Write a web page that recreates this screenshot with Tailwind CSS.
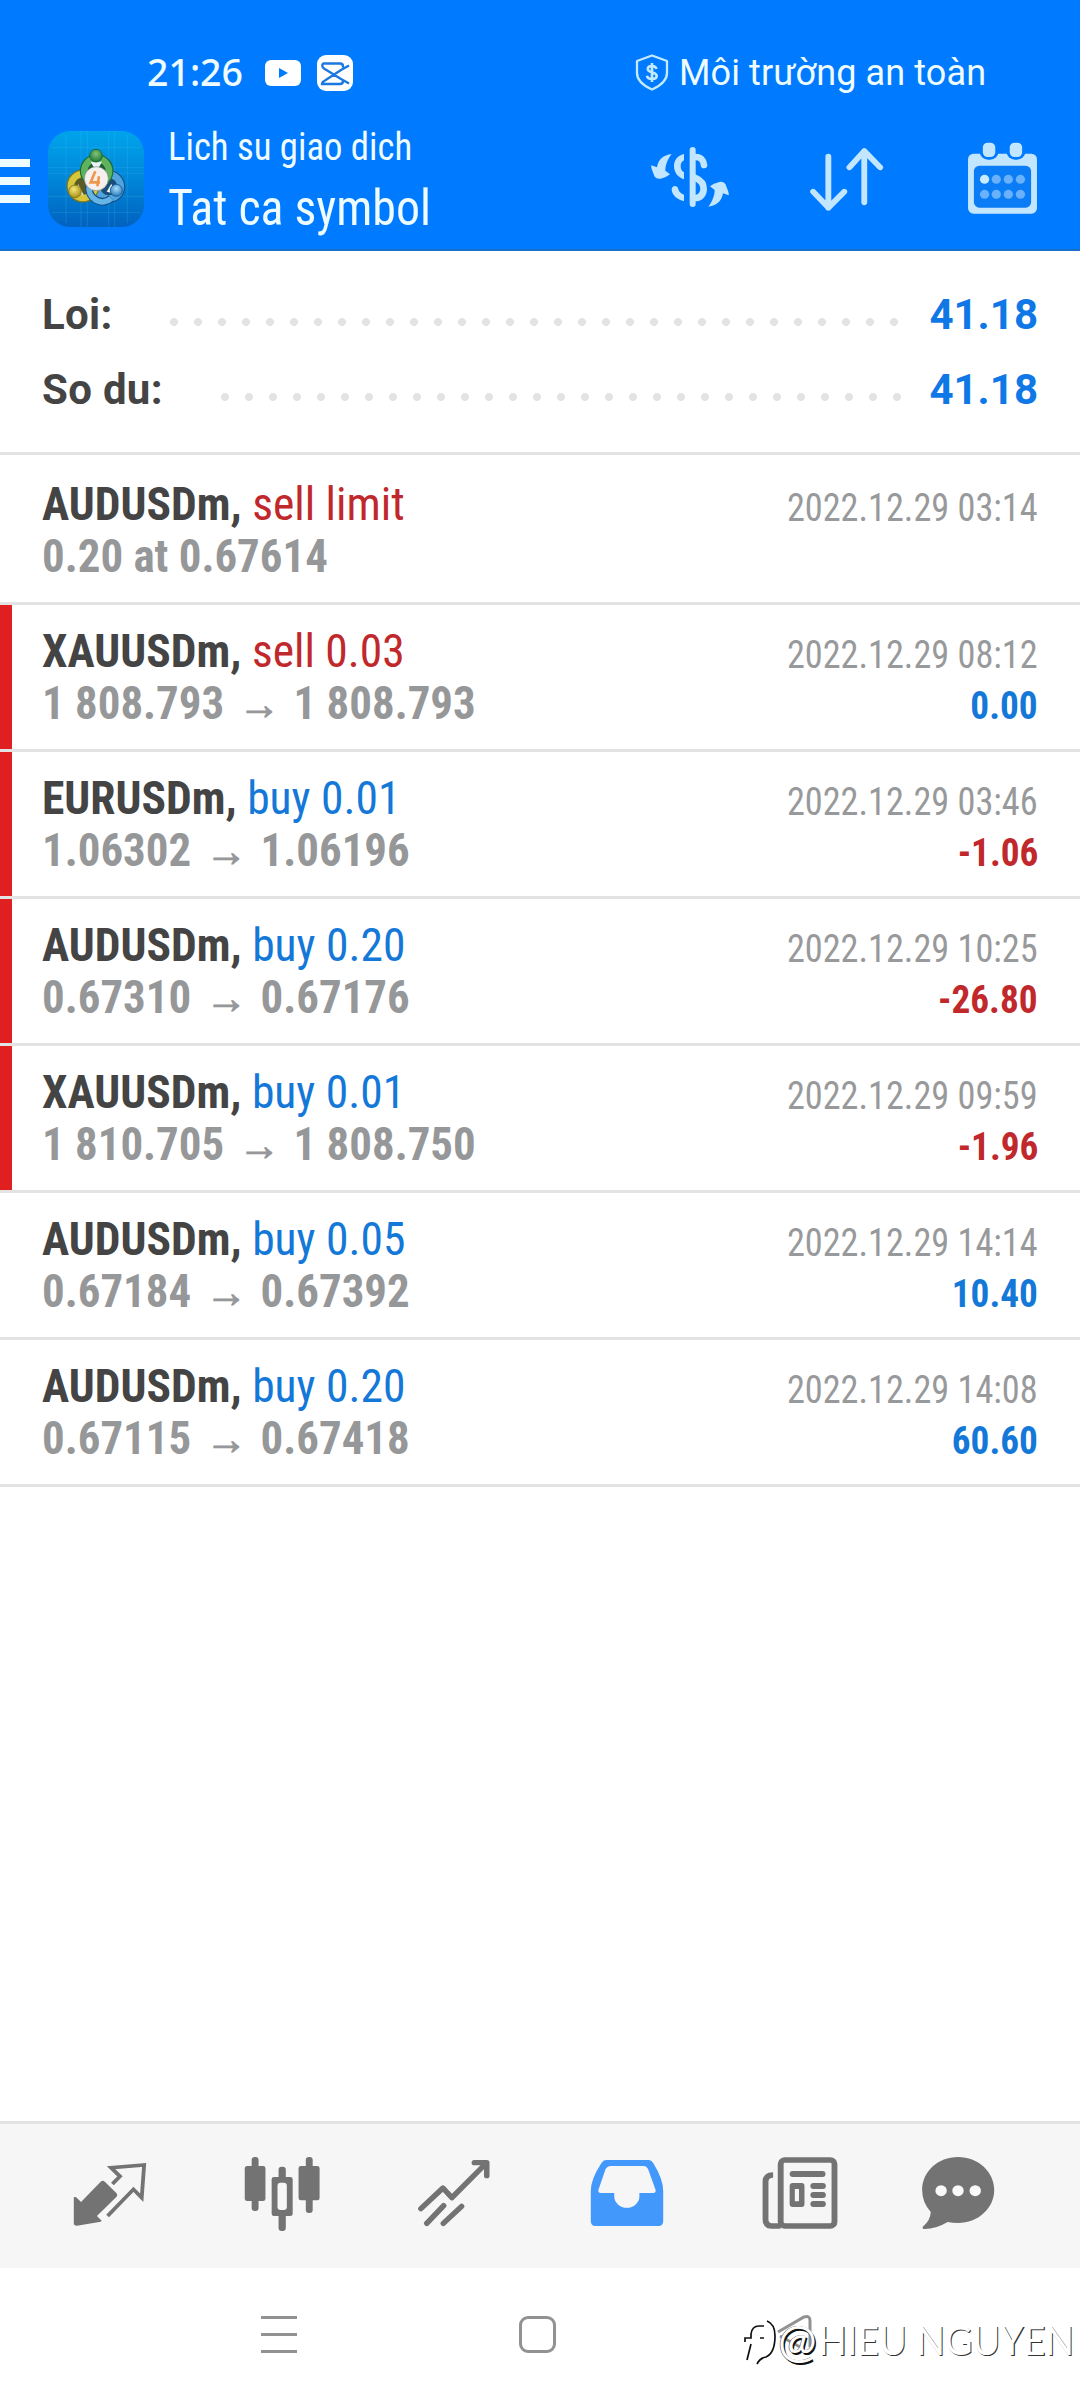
<!DOCTYPE html>
<html lang="vi">
<head>
<meta charset="utf-8">
<title>Lich su giao dich</title>
<script src="https://cdn.jsdelivr.net/npm/@tailwindcss/browser@4"></script>
</head>
<body class="w-[1080px] h-[2400px] flex flex-col bg-white font-['Roboto',sans-serif] overflow-hidden">

<header class="h-[251px] bg-[#007aff] border-b-2 border-[#1a6fc8] text-[#eefcff]">
  <div class="h-[109px] pt-[43px] flex leading-[60px]">
    <span class="-mt-px ml-[147px] w-[118px] text-[37.5px] font-medium font-['Noto_Sans',sans-serif]">21:26</span>
    <svg class="mt-[17px] w-9 h-[26px]" viewBox="0 0 36 26"><rect width="36" height="26" rx="6" fill="#fff"/><path d="M14 8l9 5-9 5z" fill="#007aff"/></svg>
    <svg class="ml-4 mt-[12px] w-9 h-9" viewBox="0 0 36 36"><rect width="36" height="36" rx="9" fill="#fff"/><path d="M32 10.500L24 15 8 25.500c-2 1-3 2-3 3.500h18c2 0 3-1 3-3l0-1M32 28.500L24 24 7 13.500C5 12.500 4.500 8.500 7 8.500h16c2 0 3 1 3 3v1" fill="none" stroke="#1b78e0" stroke-width="2.400"/></svg>
    <svg class="ml-[282px] mt-[11px] w-[34px] h-[37px]" viewBox="0 0 34 37" fill="none" stroke="#c3eaff" stroke-width="2.300"><path d="M17 1.500L32 7v12c0 8-6 12.500-15 16.500C8 31.500 2 27 2 19V7z" stroke-linejoin="round"/><path d="M21.500 15c-.5-2-2-3-4.500-3s-4.200 1.100-4.200 3c0 4.400 8.900 2.400 8.900 6.800 0 2.100-1.900 3.200-4.700 3.200s-4.600-1.200-5-3.300M17 9v19" stroke-width="2.600"/></svg>
    <span class="ml-[10px] text-[36px] tracking-[0.1px]">Môi trường an toàn</span>
  </div>
  <div class="h-[140px] flex items-center">
    <div class="mt-[4px] w-[30px] flex flex-col gap-[10px]"><i class="h-2 bg-[#eefcff]"></i><i class="h-2 bg-[#eefcff]"></i><i class="h-2 bg-[#eefcff]"></i></div>
    <svg class="ml-[18px] w-24 h-24" viewBox="0 0 288 288">
      <defs>
        <linearGradient id="bg" x1="0" y1="0" x2="0" y2="1"><stop offset="0" stop-color="#00a4ec"/><stop offset=".5" stop-color="#0086d8"/><stop offset="1" stop-color="#0062bf"/></linearGradient>
        <radialGradient id="gg" cx=".5" cy=".35" r=".7"><stop offset="0" stop-color="#7fc478"/><stop offset="1" stop-color="#1b7034"/></radialGradient>
        <radialGradient id="gy" cx=".4" cy=".35" r=".7"><stop offset="0" stop-color="#f4e878"/><stop offset="1" stop-color="#a78a12"/></radialGradient>
        <radialGradient id="gb" cx=".5" cy=".35" r=".7"><stop offset="0" stop-color="#a6dcf8"/><stop offset="1" stop-color="#1f74ba"/></radialGradient>
      </defs>
      <rect width="288" height="288" rx="66" fill="url(#bg)"/>
      <path d="M54 12v264M99 0v288M118 0v288M182 0v288M200 0v288M238 12v264M12 50h264M0 110h288M0 128h288M0 196h288M12 244h264" stroke="#4fc6f0" stroke-opacity=".2" stroke-width="3"/>
      <circle cx="182" cy="167" r="36" fill="none" stroke="#164f85" stroke-width="27"/>
      <circle cx="182" cy="167" r="36" fill="#1c4f78" stroke="#51a5de" stroke-width="20"/>
      <circle cx="105" cy="165" r="36" fill="none" stroke="#7d751c" stroke-width="27"/>
      <circle cx="105" cy="165" r="36" fill="#5b5a24" stroke="#d6c63c" stroke-width="20"/>
      <circle cx="146" cy="120" r="37" fill="none" stroke="#1d6b3a" stroke-width="27"/>
      <circle cx="146" cy="120" r="37" fill="#1d5a38" stroke="#5fb35c" stroke-width="20"/>
      <path d="M124 166a40 40 0 0 0 66 36" fill="none" stroke="#164f85" stroke-width="24"/>
      <path d="M124 164a40 40 0 0 0 66 38" fill="none" stroke="#64b4e6" stroke-width="17"/>
      <path d="M128 92h34l-10 18h-14zM90 158l-2 26 20 10zM190 158l10 30-24-6z" fill="#e8f4f4"/>
      <circle cx="144" cy="74" r="19" fill="url(#gg)" stroke="#1d6b3a" stroke-width="3"/>
      <circle cx="81" cy="181" r="19" fill="url(#gy)" stroke="#8a7d1c" stroke-width="3"/>
      <circle cx="205" cy="178" r="18" fill="url(#gb)" stroke="#1a5f9c" stroke-width="3"/>
      <circle cx="145" cy="143" r="36" fill="#f5f0ee" stroke="#7c8a80" stroke-width="2"/>
      <path d="M142 121l-14 33h28M153 136l-5 30" fill="none" stroke="#f0974a" stroke-width="8"/>
    </svg>
    <div class="ml-6 w-[472px] font-['Roboto_Condensed',sans-serif]">
      <p class="text-[39px] leading-[58px] origin-left scale-x-[.941]">Lich su giao dich</p>
      <p class="text-[50px] leading-[64px] origin-left scale-x-[.958]">Tat ca symbol</p>
    </div>
    <svg class="-mt-2 w-[100px] h-[90px]" viewBox="0 0 300 270" fill="#c3e6ff">
      <rect x="149" y="51" width="18" height="180" rx="9"/>
      <path d="M132 72c-20 5-30 20-30 36 0 20 12 34 30 40v-21c-7-4-10-11-10-19s4-14 10-17zM132 213c-20-4-36-18-37-34 0-14 18-14 20-1 2 8 8 13 17 16z"/>
      <path d="M167 81c14 0 24 10 25 24M167 144c14 6 24 14 24 32s-12 28-24 28" fill="none" stroke="#c3e6ff" stroke-width="20" stroke-linecap="round"/>
      <path d="M95 72C70 75 55 88 51 112l-17-6q-3 4 10 34 6 8 18 6 18-4 28-13l-14-11c0-17 8-37 19-50z"/>
      <path d="M205 230c25-3 40-16 44-40l17 6q3-4-10-34-6-8-18-6-18 4-28 13l14 11c0 17-8 37-19 50z"/>
    </svg>
    <svg class="ml-[69px] w-[76px] h-[65px]" preserveAspectRatio="none" viewBox="780 318 220 195" fill="none" stroke="#c3e6ff" stroke-width="17" stroke-linecap="round" stroke-linejoin="round"><path d="M836 347v153M792 452l44 48 46-48M940 484V330M897 379l43-49 46 49"/></svg>
    <svg class="-mt-[3px] ml-[82px] w-[71px] h-[72px]" preserveAspectRatio="none" viewBox="1240 304 206 216">
      <rect x="1243" y="339" width="200" height="180" rx="16" fill="#c3e6ff"/><rect x="1260" y="375" width="166" height="126" rx="16" fill="#0a7cf5"/>
      <rect x="1277" y="297" width="54" height="60" rx="24" fill="#007aff"/><rect x="1355" y="297" width="54" height="60" rx="24" fill="#007aff"/>
      <rect x="1286" y="306" width="36" height="43" rx="14" fill="#c3e6ff"/><rect x="1364" y="306" width="36" height="43" rx="14" fill="#c3e6ff"/>
      <g fill="#69b1fb"><circle cx="1291" cy="416" r="13.500" fill="#c9ecff"/><circle cx="1325" cy="416" r="13.500"/><circle cx="1360" cy="416" r="13.500"/><circle cx="1395" cy="416" r="13.500"/><circle cx="1291" cy="461" r="13.500"/><circle cx="1325" cy="461" r="13.500"/><circle cx="1360" cy="461" r="13.500"/><circle cx="1395" cy="461" r="13.500"/></g>
    </svg>
  </div>
</header>

<section class="h-[204px] pt-[26px] pr-[42px] pl-[42px] border-b-[3px] border-[#e3e3e3] text-[42px] font-bold text-[#444]">
  <div class="h-[75px] flex items-center">
    <span class="w-[120px] tracking-[0.3px]">Loi:</span>
    <i class="mt-[15px] w-[744px] h-6 bg-[radial-gradient(circle,#e3e3e3_3.700px,transparent_4.300px)] bg-size-[24px_24px]"></i>
    <span class="ml-auto text-[#0f78e6]">41.18</span>
  </div>
  <div class="h-[75px] flex items-center">
    <span class="w-[171px] whitespace-nowrap tracking-[0.3px]">So du:</span>
    <i class="mt-[15px] w-[696px] h-6 bg-[radial-gradient(circle,#e3e3e3_3.700px,transparent_4.300px)] bg-size-[24px_24px]"></i>
    <span class="ml-auto text-[#0f78e6]">41.18</span>
  </div>
</section>

<main id="deals" class="flex-1 pt-[3px] font-['Roboto_Condensed',sans-serif]"></main>

<nav class="h-[147px] bg-[#f6f6f6] border-t-[3px] border-[#e2e2e2] pl-[70px] grid grid-cols-[171.5px_172px_173px_173.5px_158px_auto] items-center">
  <svg class="size-20" preserveAspectRatio="none" viewBox="204 168 232 240" fill="#737373"><path d="M215 291l7 1 14 14 57-61q6-5 12 0l34 35q4 5 0 10l-57 58 14 14-3 3-69 12q-9 0-9-8z"/><path d="M327 252l22-23-26-26 96-8-7 98-24-25-75 80" fill="none" stroke="#737373" stroke-width="11"/></svg>
  <svg class="size-20" preserveAspectRatio="none" viewBox="701 168 232 240" fill="#737373"><rect x="709" y="198" width="60" height="105" rx="7"/><rect x="729" y="171" width="20" height="162" rx="9"/><rect x="865" y="198" width="61" height="103" rx="7"/><rect x="886" y="171" width="20" height="168" rx="9"/><rect x="807" y="200" width="21" height="193" rx="9"/><rect x="787" y="231" width="61" height="117" rx="7"/><rect x="804" y="248" width="27" height="82" rx="9" fill="#f6f6f6"/></svg>
  <svg class="size-20" preserveAspectRatio="none" viewBox="1201 168 232 240" fill="none" stroke="#737373" stroke-width="16" stroke-linecap="round" stroke-linejoin="round"><path d="M1221 326l64-62 26 29 100-104M1376 188h36v39"/><path d="M1238 370l49-53M1286 370l53-51"/></svg>
  <svg class="size-20" preserveAspectRatio="none" viewBox="135 168 232 240"><path fill-rule="evenodd" d="M190 180h124q8 0 13 9 29 48 29 84v91q0 14-14 14H160q-14 0-14-14v-91q0-36 31-84 5-9 13-9zM203 198q-9 0-14 9l-21 63q-1 9 7 9h39v10a36 34 0 0 0 73 0v-10h40q8 0 7-9l-22-63q-4-9-12-9z" fill="#4398fb"/></svg>
  <svg class="size-20" preserveAspectRatio="none" viewBox="639 168 232 240"><g fill="none" stroke="#737373"><rect x="699" y="180" width="156" height="198" rx="12" stroke-width="17"/><path d="M677 225q-22 0-22 20v113q0 20 17 20h27" stroke-width="17"/></g><g fill="#737373"><rect x="725" y="213" width="104" height="18" rx="9"/><path fill-rule="evenodd" d="M734 249h26q8 0 8 9v54q0 9-8 9h-26q-9 0-9-9v-54q0-9 9-9zM740 267v37h12v-37z"/><rect x="785" y="249" width="45" height="18" rx="9"/><rect x="785" y="276" width="45" height="18" rx="9"/><rect x="785" y="303" width="45" height="18" rx="9"/></g></svg>
  <svg class="size-20" preserveAspectRatio="none" viewBox="1097 168 232 240"><path d="M1213 171c58 0 105 44 105 99s-47 99-105 99q-16 0-30-3-34 21-66 21-9 0-6-7 22-18 23-44-25-29-25-66c0-55 46-99 104-99z" fill="#737373"/><g fill="#f9f9f9"><circle cx="1164" cy="272" r="16.500"/><circle cx="1213" cy="272" r="16.500"/><circle cx="1263" cy="272" r="16.500"/></g></svg>
</nav>

<footer class="h-[132px] relative flex items-center">
  <div class="ml-[261px] w-9 flex flex-col gap-[14px]"><i class="h-[3px] bg-[#929292]"></i><i class="h-[3px] bg-[#929292]"></i><i class="h-[3px] bg-[#929292]"></i></div>
  <div class="ml-[222px] w-[37px] h-[37px] rounded-[9px] border-[3px] border-[#929292]"></div>
  <svg class="ml-[219px] w-10 h-10" viewBox="0 0 40 40" fill="none" stroke="#929292" stroke-width="3"><path d="M3 18L29 3q6-2 6 4v26M5 22l22 12"/></svg>
  <div class="absolute left-[744px] top-[47px] h-[50px] flex items-center whitespace-nowrap text-white font-['Lato',sans-serif]">
    <svg class="w-[34px] h-[50px]" viewBox="0 0 34 50" fill="none" stroke="#111" stroke-width="1.700"><path d="M20 11h-5q-7 0-8 8v4H1v4M7 29L3 45M23 6q8 3 8 15 0 17-9 21-6 1-9 7M16 23h4"/></svg>
    <span class="w-[40px] text-[46px] leading-[50px] [text-shadow:1.500px_1.500px_0.500px_#111,-0.500px_-0.500px_0.500px_#333]">@</span>
    <span class="text-[40px] leading-[50px] origin-left scale-x-[.94] [text-shadow:1.200px_1.200px_0.500px_#333]">HIEU NGUYEN</span>
  </div>
</footer>

<script>
const sell = 'text-[#c0282c]', buy = 'text-[#1478d8]';
const deals = [
  ['AUDUSDm', 'sell limit', sell, '0.20 at 0.67614', '2022.12.29 03:14', '', '', false],
  ['XAUUSDm', 'sell 0.03', sell, '1 808.793 → 1 808.793', '2022.12.29 08:12', '0.00', buy, true],
  ['EURUSDm', 'buy 0.01', buy, '1.06302 → 1.06196', '2022.12.29 03:46', '-1.06', sell, true],
  ['AUDUSDm', 'buy 0.20', buy, '0.67310 → 0.67176', '2022.12.29 10:25', '-26.80', sell, true],
  ['XAUUSDm', 'buy 0.01', buy, '1 810.705 → 1 808.750', '2022.12.29 09:59', '-1.96', sell, true],
  ['AUDUSDm', 'buy 0.05', buy, '0.67184 → 0.67392', '2022.12.29 14:14', '10.40', buy, false],
  ['AUDUSDm', 'buy 0.20', buy, '0.67115 → 0.67418', '2022.12.29 14:08', '60.60', buy, false],
];
document.getElementById('deals').innerHTML = deals.map(([sym, op, opColor, price, time, profit, pColor, closed]) => `
  <article class="h-[147px] border-b-[3px] border-b-[#e3e3e3] flex">
    <i class="w-3 ${closed ? 'bg-[#e01f20]' : ''}"></i>
    <div class="flex-1 pt-[21px] pl-[30px] pr-[42px]">
      <div class="h-[51px] leading-[51px] flex justify-between items-baseline"><h2 class="text-[46.5px] origin-left scale-x-[.979]"><b class="text-[#444]">${sym},</b> <span class="${opColor}">${op}</span></h2><time class="translate-y-px text-[39px] text-[#98999b] origin-right scale-x-[.93]">${time}</time></div>
      <div class="h-[51px] leading-[51px] flex justify-between items-baseline font-bold"><p class="text-[47px] text-[#969799] origin-left scale-x-[.955]">${price.replace('→', '<span class="font-medium text-[44px] ml-[4px] mr-[3px] [-webkit-text-stroke:1px_#969799]">→</span>')}</p><span class="text-[38px] origin-right scale-x-[.98] ${pColor}">${profit}</span></div>
    </div>
  </article>`).join('');
</script>
</body>
</html>
